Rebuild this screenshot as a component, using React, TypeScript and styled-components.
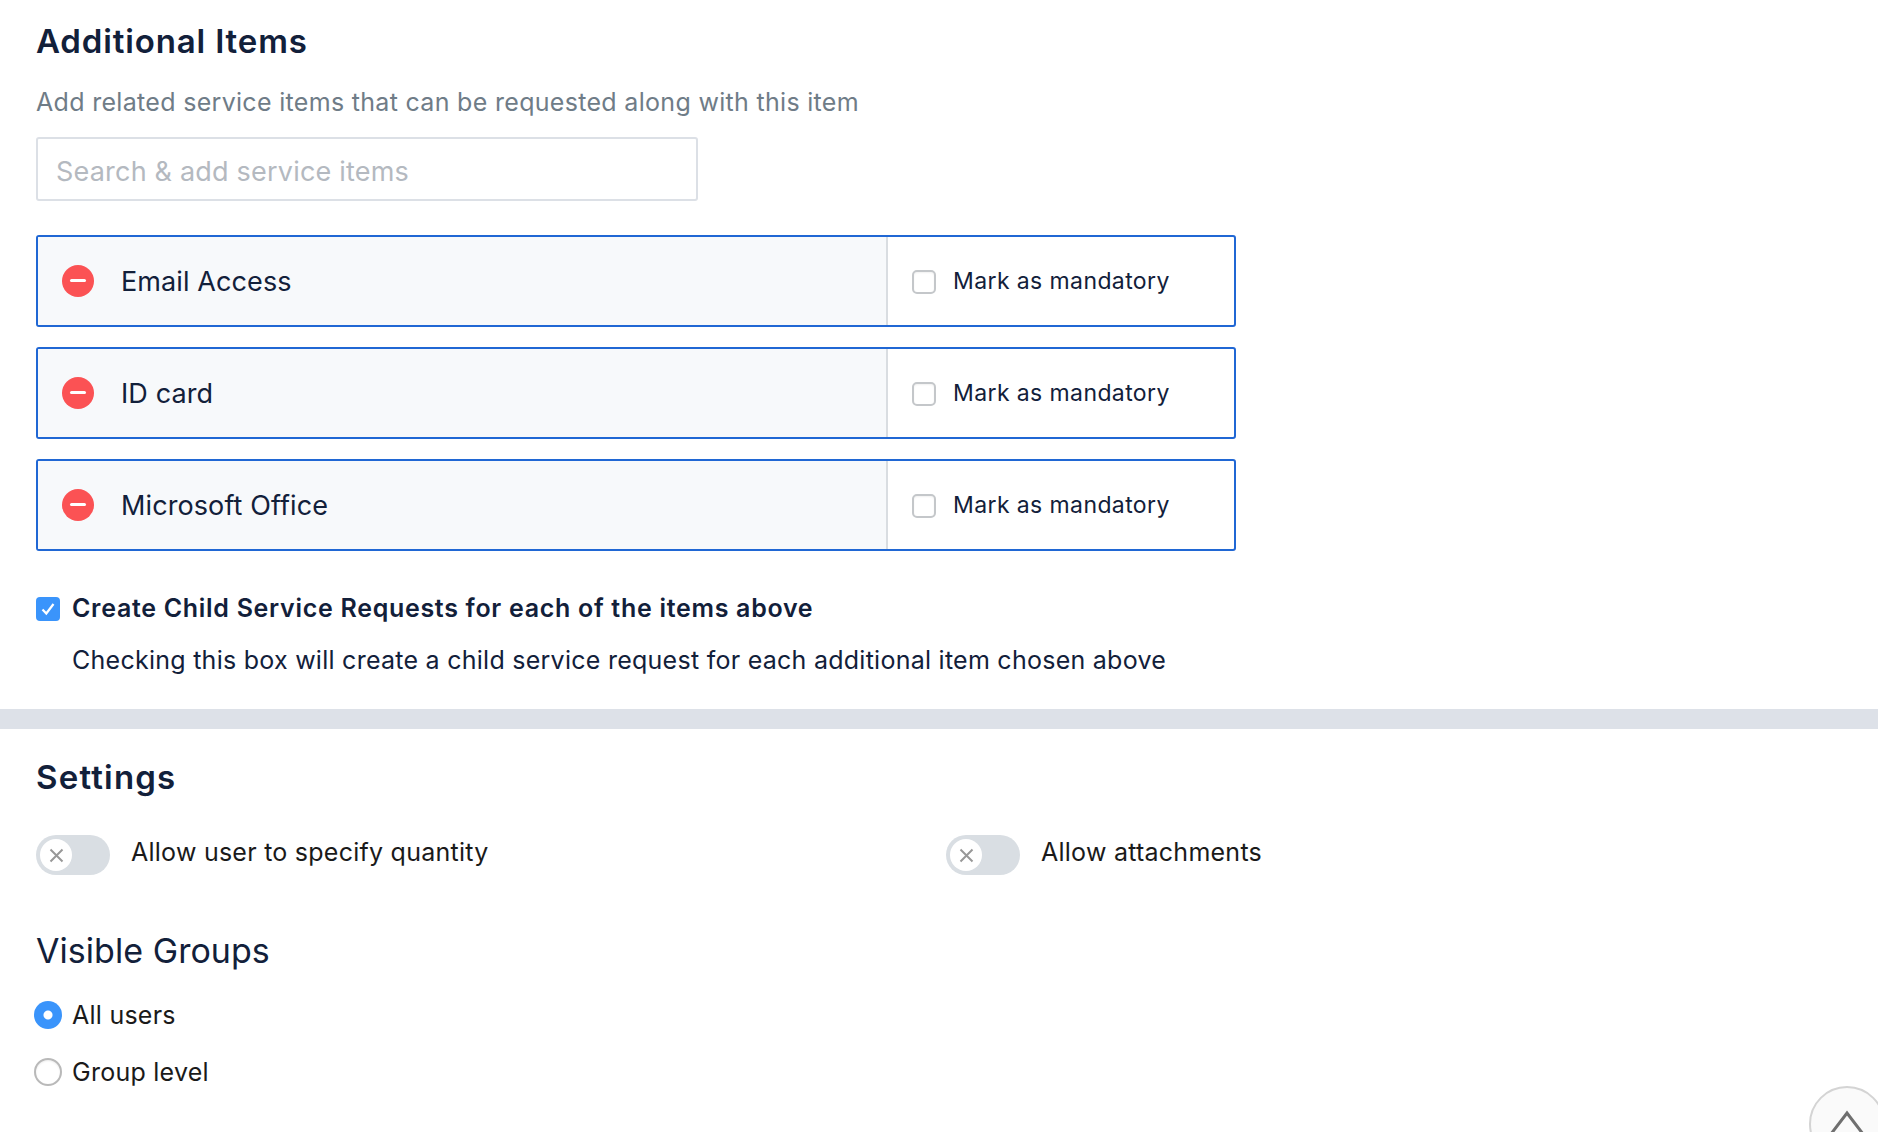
import React, { FC } from 'react'
import styled, { createGlobalStyle } from 'styled-components'

const GlobalStyle = createGlobalStyle`
  html, body {
    margin: 0;
    padding: 0;
    background: #fff;
    overflow: hidden;
    height: 100%;
  }
  body {
    font-family: Inter, "Liberation Sans", sans-serif;
    color: #12203a;
    -webkit-font-smoothing: antialiased;
  }
  * { box-sizing: border-box; }
`

const items = ['Email Access', 'ID card', 'Microsoft Office']

const Toggle: FC<{ label: string }> = ({ label }) => (
  <ToggleField>
    <Track>
      <Knob>
        <svg width="15" height="15" viewBox="0 0 15 15" fill="none">
          <path d="M1.5 1.5l12 12M13.5 1.5l-12 12" stroke="#989898" strokeWidth="2" />
        </svg>
      </Knob>
    </Track>
    <ToggleLabel>{label}</ToggleLabel>
  </ToggleField>
)

export default function App() {
  return (
    <>
      <GlobalStyle />
      <Page>
        <ItemsSection>
          <Heading>Additional Items</Heading>
          <Hint>Add related service items that can be requested along with this item</Hint>
          <SearchInput placeholder="Search &amp; add service items" />
          <ItemList>
            {items.map(name => (
              <ItemRow key={name}>
                <ItemName>
                  <RemoveIcon />
                  <ItemLabel>{name}</ItemLabel>
                </ItemName>
                <ItemOption>
                  <CheckBox />
                  <OptionLabel>Mark as mandatory</OptionLabel>
                </ItemOption>
              </ItemRow>
            ))}
          </ItemList>
          <ChildRow>
            <CheckedBox>
              <svg width="16" height="14" viewBox="0 0 16 14" fill="none">
                <path d="M2.5 7.5l3.8 4L13.5 2" stroke="#fff" strokeWidth="2.2" />
              </svg>
            </CheckedBox>
            <ChildTitle>Create Child Service Requests for each of the items above</ChildTitle>
          </ChildRow>
          <ChildHint>Checking this box will create a child service request for each additional item chosen above</ChildHint>
        </ItemsSection>
        <Band />
        <SettingsSection>
          <SettingsHeading>Settings</SettingsHeading>
          <ToggleGrid>
            <Toggle label="Allow user to specify quantity" />
            <Toggle label="Allow attachments" />
          </ToggleGrid>
          <GroupsHeading>Visible Groups</GroupsHeading>
          <RadioRow>
            <Radio $checked />
            <RadioLabel>All users</RadioLabel>
          </RadioRow>
          <RadioRow>
            <Radio />
            <RadioLabel>Group level</RadioLabel>
          </RadioRow>
        </SettingsSection>
        <ScrollTop>
          <svg width="36" height="34" viewBox="0 0 36 34" fill="none">
            <path d="M2 24L18 3l16 21" stroke="#6f6f6f" strokeWidth="3" />
          </svg>
        </ScrollTop>
      </Page>
    </>
  )
}

const Page = styled.div`
  position: relative;
  width: 1878px;
  height: 1132px;
  overflow: hidden;
`

const ItemsSection = styled.section`
  padding: 21px 0 0 36px;
  height: 709px;
`

const Heading = styled.h2`
  margin: 0;
  font-size: 33px;
  line-height: 40px;
  font-weight: 600;
  letter-spacing: 0.85px;
  color: #12203a;
`

const SettingsHeading = styled(Heading)`
  letter-spacing: 1.2px;
`

const Hint = styled.p`
  margin: 21px 0 0;
  font-size: 25px;
  line-height: 40px;
  letter-spacing: 0.31px;
  color: #6f7c87;
`

const SearchInput = styled.input`
  display: block;
  margin-top: 15px;
  width: 662px;
  height: 64px;
  padding: 4px 18px 0;
  border: 2px solid #dce0e6;
  border-radius: 3px;
  font-family: inherit;
  font-size: 27px;
  letter-spacing: 0.2px;
  outline: none;
  &::placeholder {
    color: #b4b9c0;
    opacity: 1;
  }
`

const ItemList = styled.div`
  display: flex;
  flex-direction: column;
  gap: 20px;
  margin-top: 34px;
`

const ItemRow = styled.div`
  display: flex;
  width: 1200px;
  height: 92px;
  border: 2px solid #2067d4;
  border-radius: 3px;
  overflow: hidden;
`

const ItemName = styled.div`
  display: flex;
  align-items: center;
  width: 850px;
  padding-left: 24px;
  background: #f7f9fb;
  border-right: 2px solid #d9dde1;
`

const RemoveIcon = styled.span`
  position: relative;
  flex: none;
  width: 32px;
  height: 32px;
  border-radius: 50%;
  background: #fb5254;
  &::after {
    content: '';
    position: absolute;
    left: 8px;
    top: 14px;
    width: 16px;
    height: 3px;
    border-radius: 2px;
    background: #fff;
  }
`

const ItemLabel = styled.span`
  margin-left: 27px;
  font-size: 27px;
  letter-spacing: 0.1px;
  color: #12203a;
`

const ItemOption = styled.div`
  display: flex;
  align-items: center;
  flex: 1;
  padding-left: 24px;
`

const CheckBox = styled.span`
  flex: none;
  width: 24px;
  height: 24px;
  margin-top: 2px;
  border: 2px solid #c4c7ca;
  border-radius: 5px;
  background: #fff;
  box-shadow: inset 0 1px 2px rgba(0, 0, 0, 0.06);
`

const OptionLabel = styled.span`
  margin: -1px 0 0 17px;
  font-size: 23px;
  letter-spacing: 0.4px;
  color: #12203a;
`

const ChildRow = styled.div`
  display: flex;
  align-items: center;
  margin-top: 40px;
`

const CheckedBox = styled.span`
  display: flex;
  align-items: center;
  justify-content: center;
  flex: none;
  width: 24px;
  height: 24px;
  margin-top: 1px;
  border-radius: 4px;
  background: #3a94fb;
`

const ChildTitle = styled.span`
  margin-left: 12px;
  font-size: 25px;
  line-height: 34px;
  font-weight: 600;
  letter-spacing: 0.7px;
  color: #12203a;
`

const ChildHint = styled.p`
  margin: 18px 0 0 36px;
  font-size: 25px;
  line-height: 34px;
  letter-spacing: 0.26px;
  color: #12203a;
`

const Band = styled.div`
  height: 20px;
  background: #dde1e8;
`

const SettingsSection = styled.section`
  padding: 28px 0 0 36px;
`

const ToggleGrid = styled.div`
  display: grid;
  grid-template-columns: 910px auto;
  justify-content: start;
  margin-top: 38px;
`

const ToggleField = styled.div`
  display: flex;
  align-items: center;
`

const Track = styled.span`
  display: flex;
  align-items: center;
  flex: none;
  width: 74px;
  height: 40px;
  padding-left: 4px;
  border-radius: 20px;
  background: #d9dee3;
`

const Knob = styled.span`
  display: flex;
  align-items: center;
  justify-content: center;
  width: 32px;
  height: 32px;
  padding-top: 1px;
  border-radius: 50%;
  background: #fff;
`

const ToggleLabel = styled.span`
  margin: -6px 0 0 21px;
  font-size: 25px;
  letter-spacing: 0.25px;
  color: #1a1a1a;
`

const GroupsHeading = styled.h3`
  margin: 56px 0 0;
  font-size: 34px;
  line-height: 40px;
  font-weight: 400;
  letter-spacing: 0.05px;
  color: #12203a;
`

const RadioRow = styled.div`
  display: flex;
  align-items: center;
  height: 28px;
  margin: 30px 0 0 -2px;
  & + & {
    margin-top: 29px;
  }
`

const Radio = styled.span<{ $checked?: boolean }>`
  flex: none;
  width: 28px;
  height: 28px;
  border-radius: 50%;
  background: ${props => (props.$checked ? 'radial-gradient(circle, #fff 0 4px, #3a94fb 5px)' : '#fff')};
  border: ${props => (props.$checked ? 'none' : '2px solid #b9b9b9')};
  box-shadow: ${props => (props.$checked ? 'none' : 'inset 0 1px 2px rgba(0, 0, 0, 0.08)')};
`

const RadioLabel = styled.span`
  margin-left: 10px;
  font-size: 25px;
  letter-spacing: 0.25px;
  color: #1a1a1a;
`

const ScrollTop = styled.div`
  position: absolute;
  left: 1809px;
  top: 1086px;
  display: flex;
  justify-content: center;
  align-items: flex-start;
  width: 76px;
  height: 76px;
  padding-top: 22px;
  border: 2px solid #d4d4d4;
  border-radius: 50%;
  background: #fafafa;
`
